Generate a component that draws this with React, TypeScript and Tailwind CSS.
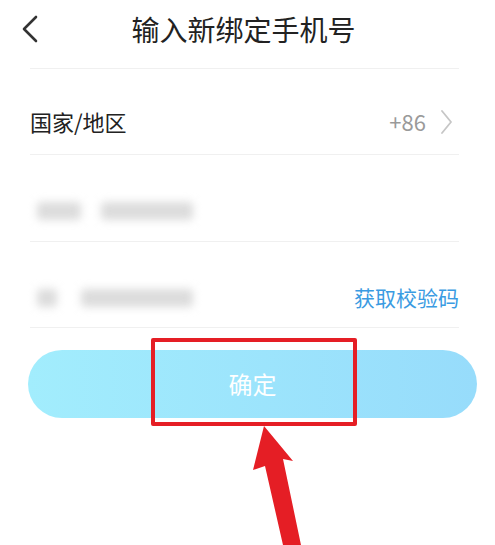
const cjk = { fontFamily: '"Noto Sans CJK SC", "Noto Sans", sans-serif' }

function Blur({ w }: { w: number }) {
  return <div className="h-[18px] rounded bg-[#dcdcdc] blur-[4px]" style={{ width: w }} />
}

export default function App() {
  return (
    <div className="relative h-[545px] w-[495px] overflow-hidden bg-white" style={cjk}>
      <header className="relative flex h-[58px] items-center justify-center pr-[8px]">
        <svg className="absolute left-[20px] top-[14px]" width="20" height="30" viewBox="0 0 20 30">
          <polyline points="16,3 4,15 16,27" fill="none" stroke="#333" strokeWidth="2.6" strokeLinecap="round" strokeLinejoin="round" />
        </svg>
        <h1 className="text-[28px] leading-none text-[#222]">输入新绑定手机号</h1>
      </header>

      <div className="mt-[10px] pl-[30px] pr-[36px]">
        <div className="flex h-[87px] items-center justify-between border-y border-[#f0f0f0] pt-[20px]">
          <span className="text-[22px] text-[#222]">国家/地区</span>
          <span className="mr-[6px] flex items-center gap-[14px] text-[22px] text-[#9a9a9a]">
            +86
            <svg width="13" height="24" viewBox="0 0 13 24">
              <polyline points="2,1 11,12 2,23" fill="none" stroke="#c6c6c6" strokeWidth="1.8" strokeLinecap="round" strokeLinejoin="round" />
            </svg>
          </span>
        </div>
        <div className="flex h-[87px] items-center gap-[20px] border-b border-[#f0f0f0] pl-[7px] pt-[26px]">
          <Blur w={44} />
          <Blur w={92} />
        </div>
        <div className="flex h-[86px] items-center border-b border-[#f0f0f0] pl-[7px] pt-[26px]">
          <div className="flex items-center gap-[24px]">
            <Blur w={20} />
            <Blur w={112} />
          </div>
          <span className="ml-auto text-[21px] text-[#3a9be2]">获取校验码</span>
        </div>
      </div>

      <div className="px-[28px] pr-[18px] pt-[22px]">
        <button className="flex h-[68px] w-full items-center justify-center rounded-full bg-gradient-to-r from-[#a2edfd] to-[#97dcfb] text-[24px] text-white">
          确定
        </button>
      </div>

      <div className="absolute left-[151px] top-[338px] h-[88px] w-[206px] rounded-[2px] border-[4px] border-[#e51e25]" />

      <svg className="absolute left-0 top-0" width="495" height="545" viewBox="0 0 495 545">
        <polygon
          points="264,426 293,461 283,459 301,545 283,545 265,466 253,470"
          fill="#e51e25"
        />
      </svg>
    </div>
  )
}
